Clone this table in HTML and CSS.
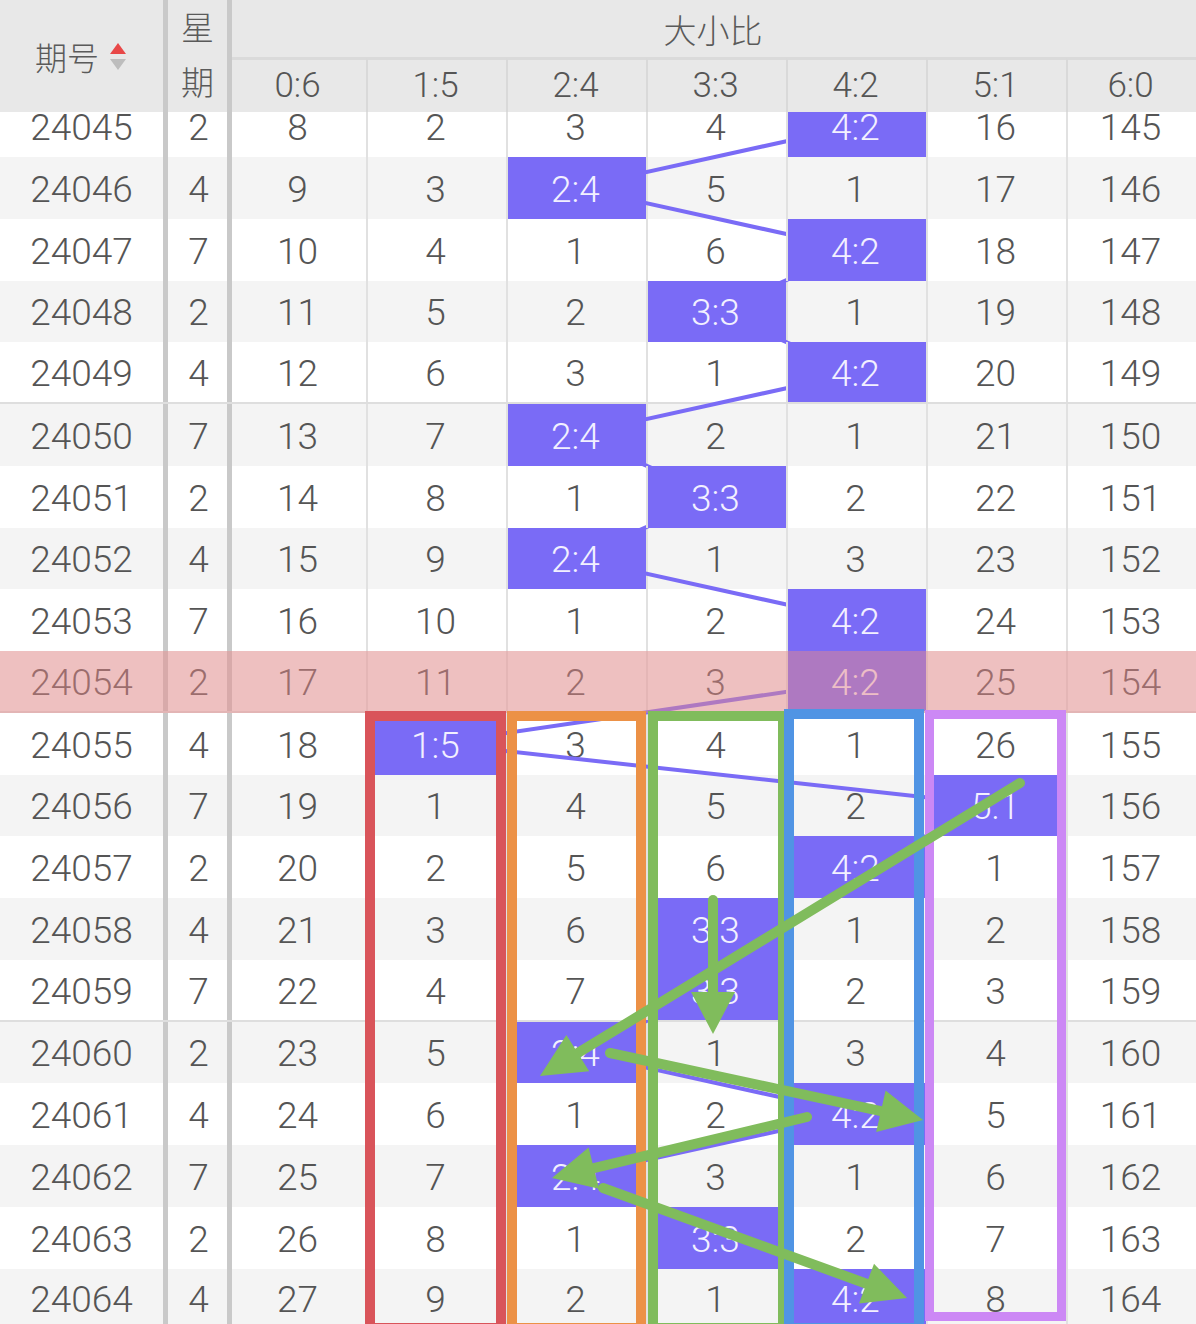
FILE: index.html
```html
<!DOCTYPE html>
<html lang="zh-CN">
<head>
<meta charset="utf-8">
<title>大小比走势</title>
<link rel="stylesheet" href="styles.css">
</head>
<body>
<div class="page">
  <div class="head">
    <div class="h-id"><span>期号</span><span class="sort"><i class="up"></i><i class="down"></i></span></div>
    <div class="h-wk">星期</div>
    <div class="h-grp">大小比</div>
    <div class="h-sub">0:6</div>
    <div class="h-sub">1:5</div>
    <div class="h-sub">2:4</div>
    <div class="h-sub">3:3</div>
    <div class="h-sub">4:2</div>
    <div class="h-sub">5:1</div>
    <div class="h-sub">6:0</div>
  </div>
  <div class="body">
    <div class="rows">
      <svg class="trend" width="1196" height="1235" viewBox="0 0 1196 1235">
        <polyline points="856,30.9 576,92.6 856,154.4 716,216.1 856,277.9 576,339.6 716,401.4 576,463.1 856,524.9 856,586.6 436,648.4 996,710.1 856,771.9 716,833.6 716,895.4 576,957.1 856,1018.9 576,1080.6 716,1142.4 856,1204.1"/>
      </svg>
      <div class="row"><div class="c id">24045</div><div class="c wk">2</div><div class="c d">8</div><div class="c d">2</div><div class="c d">3</div><div class="c d">4</div><div class="c d hit">4:2</div><div class="c d">16</div><div class="c d">145</div></div>
      <div class="row"><div class="c id">24046</div><div class="c wk">4</div><div class="c d">9</div><div class="c d">3</div><div class="c d hit">2:4</div><div class="c d">5</div><div class="c d">1</div><div class="c d">17</div><div class="c d">146</div></div>
      <div class="row"><div class="c id">24047</div><div class="c wk">7</div><div class="c d">10</div><div class="c d">4</div><div class="c d">1</div><div class="c d">6</div><div class="c d hit">4:2</div><div class="c d">18</div><div class="c d">147</div></div>
      <div class="row"><div class="c id">24048</div><div class="c wk">2</div><div class="c d">11</div><div class="c d">5</div><div class="c d">2</div><div class="c d hit">3:3</div><div class="c d">1</div><div class="c d">19</div><div class="c d">148</div></div>
      <div class="row"><div class="c id">24049</div><div class="c wk">4</div><div class="c d">12</div><div class="c d">6</div><div class="c d">3</div><div class="c d">1</div><div class="c d hit">4:2</div><div class="c d">20</div><div class="c d">149</div></div>
      <div class="row"><div class="c id">24050</div><div class="c wk">7</div><div class="c d">13</div><div class="c d">7</div><div class="c d hit">2:4</div><div class="c d">2</div><div class="c d">1</div><div class="c d">21</div><div class="c d">150</div></div>
      <div class="row"><div class="c id">24051</div><div class="c wk">2</div><div class="c d">14</div><div class="c d">8</div><div class="c d">1</div><div class="c d hit">3:3</div><div class="c d">2</div><div class="c d">22</div><div class="c d">151</div></div>
      <div class="row"><div class="c id">24052</div><div class="c wk">4</div><div class="c d">15</div><div class="c d">9</div><div class="c d hit">2:4</div><div class="c d">1</div><div class="c d">3</div><div class="c d">23</div><div class="c d">152</div></div>
      <div class="row"><div class="c id">24053</div><div class="c wk">7</div><div class="c d">16</div><div class="c d">10</div><div class="c d">1</div><div class="c d">2</div><div class="c d hit">4:2</div><div class="c d">24</div><div class="c d">153</div></div>
      <div class="row"><div class="c id">24054</div><div class="c wk">2</div><div class="c d">17</div><div class="c d">11</div><div class="c d">2</div><div class="c d">3</div><div class="c d hit">4:2</div><div class="c d">25</div><div class="c d">154</div></div>
      <div class="row"><div class="c id">24055</div><div class="c wk">4</div><div class="c d">18</div><div class="c d hit">1:5</div><div class="c d">3</div><div class="c d">4</div><div class="c d">1</div><div class="c d">26</div><div class="c d">155</div></div>
      <div class="row"><div class="c id">24056</div><div class="c wk">7</div><div class="c d">19</div><div class="c d">1</div><div class="c d">4</div><div class="c d">5</div><div class="c d">2</div><div class="c d hit">5:1</div><div class="c d">156</div></div>
      <div class="row"><div class="c id">24057</div><div class="c wk">2</div><div class="c d">20</div><div class="c d">2</div><div class="c d">5</div><div class="c d">6</div><div class="c d hit">4:2</div><div class="c d">1</div><div class="c d">157</div></div>
      <div class="row"><div class="c id">24058</div><div class="c wk">4</div><div class="c d">21</div><div class="c d">3</div><div class="c d">6</div><div class="c d hit">3:3</div><div class="c d">1</div><div class="c d">2</div><div class="c d">158</div></div>
      <div class="row"><div class="c id">24059</div><div class="c wk">7</div><div class="c d">22</div><div class="c d">4</div><div class="c d">7</div><div class="c d hit">3:3</div><div class="c d">2</div><div class="c d">3</div><div class="c d">159</div></div>
      <div class="row"><div class="c id">24060</div><div class="c wk">2</div><div class="c d">23</div><div class="c d">5</div><div class="c d hit">2:4</div><div class="c d">1</div><div class="c d">3</div><div class="c d">4</div><div class="c d">160</div></div>
      <div class="row"><div class="c id">24061</div><div class="c wk">4</div><div class="c d">24</div><div class="c d">6</div><div class="c d">1</div><div class="c d">2</div><div class="c d hit">4:2</div><div class="c d">5</div><div class="c d">161</div></div>
      <div class="row"><div class="c id">24062</div><div class="c wk">7</div><div class="c d">25</div><div class="c d">7</div><div class="c d hit">2:4</div><div class="c d">3</div><div class="c d">1</div><div class="c d">6</div><div class="c d">162</div></div>
      <div class="row"><div class="c id">24063</div><div class="c wk">2</div><div class="c d">26</div><div class="c d">8</div><div class="c d">1</div><div class="c d hit">3:3</div><div class="c d">2</div><div class="c d">7</div><div class="c d">163</div></div>
      <div class="row"><div class="c id">24064</div><div class="c wk">4</div><div class="c d">27</div><div class="c d">9</div><div class="c d">2</div><div class="c d">1</div><div class="c d hit">4:2</div><div class="c d">8</div><div class="c d">164</div></div>
      <div class="hl"></div>
    </div>
  </div>
  <svg class="marks" width="1196" height="1324" viewBox="0 0 1196 1324">
    <rect class="box red" x="370" y="716" width="131" height="612"/>
    <rect class="box orange" x="512" y="716" width="129" height="612"/>
    <rect class="box green" x="653" y="716" width="130" height="612"/>
    <rect class="box blue" x="789" y="714" width="130" height="614"/>
    <rect class="box violet" x="929.5" y="714.5" width="132" height="602"/>
    <g class="arrow">
      <line x1="1020" y1="783" x2="577.8" y2="1053.1"/>
      <polygon points="540,1076 566.4,1035 589.2,1071.2"/>
      <line x1="713" y1="900" x2="713" y2="995"/>
      <polygon points="713,1034 691,992 735,992"/>
      <line x1="610" y1="1053" x2="880.9" y2="1111.2"/>
      <polygon points="923,1120 876.2,1132 885.6,1090.4"/>
      <line x1="807" y1="1117" x2="593.8" y2="1168.2"/>
      <polygon points="552,1178 588.6,1147.6 599,1188.8"/>
      <line x1="603" y1="1188" x2="866.5" y2="1283.7"/>
      <polygon points="907,1298 859,1303.6 874,1263.8"/>
    </g>
  </svg>
</div>
</body>
</html>
```

FILE: styles.css
```css
* { box-sizing: border-box; margin: 0; padding: 0; }
html, body { background: #fff; }
body {
  width: 1196px;
  height: 1324px;
  overflow: hidden;
  font-family: Roboto, "Noto Sans CJK SC", sans-serif;
  font-weight: 300;
  color: #555;
}
.page {
  position: relative;
  width: 1196px;
  height: 1324px;
  display: flex;
  flex-direction: column;
  overflow: hidden;
}

/* header */
.head {
  display: grid;
  grid-template-columns: 168px 64px 134px repeat(5, 140px) 130px;
  grid-template-rows: 57px 55px;
  background: #e8e8e8;
  flex: none;
}
.h-id {
  grid-row: 1 / 3;
  grid-column: 1;
  border-right: 5px solid #c9c9c9;
  display: flex;
  align-items: center;
  justify-content: center;
  gap: 11px;
  font-size: 32px;
  color: #5a5a5a;
  padding-right: 2px;
}
.sort {
  display: flex;
  flex-direction: column;
  gap: 5px;
  margin-top: 1px;
}
.sort i {
  display: block;
  width: 0;
  height: 0;
  border-left: 8px solid transparent;
  border-right: 8px solid transparent;
}
.sort .up { border-bottom: 11px solid #e84848; }
.sort .down { border-top: 11px solid #bdbdbd; }
.h-wk {
  grid-row: 1 / 3;
  grid-column: 2;
  border-right: 5px solid #c9c9c9;
  font-size: 33px;
  color: #5a5a5a;
  line-height: 55px;
  text-align: center;
  padding-top: 1px;
}
.h-grp {
  grid-row: 1;
  grid-column: 3 / 10;
  font-size: 33px;
  color: #5a5a5a;
  display: flex;
  align-items: center;
  justify-content: center;
  padding-right: 2px;
}
.h-sub {
  grid-row: 2;
  border-top: 3px solid #dadada;
  font-size: 35px;
  display: flex;
  align-items: center;
  justify-content: center;
  padding-bottom: 2px;
  padding-right: 3px;
}
.h-sub + .h-sub { border-left: 2px solid #d9d9d9; }

/* body */
.body {
  flex: 1;
  overflow: hidden;
  position: relative;
}
.rows {
  position: relative;
  margin-top: -16.75px;
}
.row {
  display: grid;
  grid-template-columns: 168px 64px 134px repeat(5, 140px) 130px;
  height: 61.75px;
  background: #fff;
}
.row:nth-of-type(even) { background: #f4f4f4; }
.row:nth-of-type(5n) { border-bottom: 2px solid #dedede; }
.c {
  display: flex;
  align-items: center;
  justify-content: center;
  font-size: 37px;
  line-height: 1;
  padding-top: 3px;
}
.id { border-right: 5px solid #c9c9c9; padding-right: 0; }
.wk { border-right: 5px solid #c9c9c9; padding-left: 2px; }
.d { padding-right: 3px; }
.d + .d { border-left: 2px solid #e1e1e1; }
.hit {
  position: relative;
  z-index: 2;
  background: #7a6bf6;
  color: #f2f0ff;
}
.trend {
  position: absolute;
  top: 0;
  left: 0;
  z-index: 1;
  pointer-events: none;
}
.trend polyline {
  fill: none;
  stroke: #7a6bf6;
  stroke-width: 4;
  stroke-linejoin: round;
}
.hl {
  position: absolute;
  left: 0;
  right: 0;
  top: 555.75px;
  height: 61.75px;
  background: rgba(232, 135, 135, 0.48);
  z-index: 3;
}

/* annotations */
.marks {
  position: absolute;
  top: 0;
  left: 0;
  z-index: 5;
  pointer-events: none;
}
.box { fill: none; stroke-width: 10; }
.red { stroke: #d9545a; }
.orange { stroke: #ec9146; }
.green { stroke: #80bc5c; }
.blue { stroke: #5094e4; }
.violet { stroke: #cc88f5; stroke-width: 9; }
.arrow line {
  stroke: #80bc5c;
  stroke-width: 10;
  stroke-linecap: round;
}
.arrow polygon { fill: #80bc5c; }
```
